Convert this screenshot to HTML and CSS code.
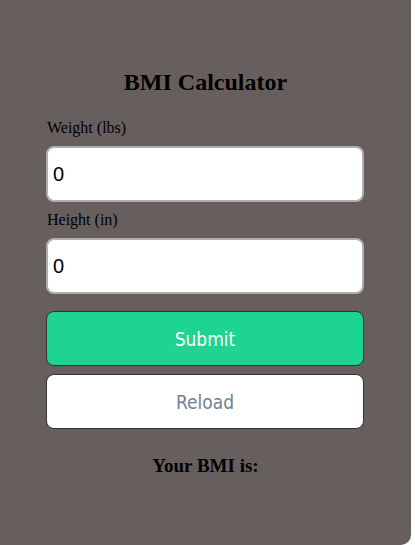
FILE: index.html
```html
<!DOCTYPE html>
<html>
<head>
<meta charset="utf-8">
<link rel="stylesheet" href="styles.css">
</head>
<body>
<div class="card">
  <h1 class="title">BMI Calculator</h1>
  <form class="form">
    <label class="label">Weight (lbs)</label>
    <input class="field" type="text" value="0">
    <label class="label">Height (in)</label>
    <input class="field" type="text" value="0">
    <button class="btn btn-submit" type="button">Submit</button>
    <button class="btn btn-reload" type="button">Reload</button>
  </form>
  <h3 class="result">Your BMI is:</h3>
</div>
</body>
</html>
```
FILE: styles.css
```css
html, body {
  margin: 0;
  padding: 0;
  background: #ffffff;
}
body {
  font-family: "Liberation Serif", "Times New Roman", serif;
  width: 415px;
  height: 545px;
  overflow: hidden;
}
.card {
  box-sizing: border-box;
  width: 411px;
  height: 545px;
  background: #675f5e;
  border-bottom-right-radius: 10px;
  padding: 68px 46px 0 46px;
  display: flex;
  flex-direction: column;
}
.title {
  margin: 0;
  font-size: 24px;
  font-weight: bold;
  text-align: center;
  color: #000;
  line-height: 28px;
}
.form {
  display: flex;
  flex-direction: column;
  margin-top: 22px;
}
.label {
  font-size: 16px;
  color: #000;
  line-height: 19px;
  padding-left: 1px;
}
.field {
  box-sizing: border-box;
  width: 318px;
  height: 56px;
  margin-top: 9px;
  margin-bottom: 8px;
  border: 2px solid #b0aeae;
  border-radius: 8px;
  background: #fff;
  padding: 0 5px;
  font-family: "Liberation Sans", Arial, sans-serif;
  font-size: 20px;
  color: #000;
  outline: none;
}
.btn {
  box-sizing: border-box;
  width: 318px;
  height: 55px;
  border-radius: 8px;
  border: 1px solid #333;
  font-family: "DejaVu Sans Condensed", "DejaVu Sans", Verdana, sans-serif;
  font-stretch: condensed;
  font-size: 19px;
  cursor: pointer;
}
.btn-submit {
  margin-top: 9px;
  background: #1dd591;
  color: #fff;
}
.btn-reload {
  margin-top: 8px;
  background: #fff;
  color: #708090;
}
.result {
  margin: 26px 0 0 0;
  text-align: center;
  font-size: 19px;
  font-weight: bold;
  color: #000;
  line-height: 22px;
}
```
